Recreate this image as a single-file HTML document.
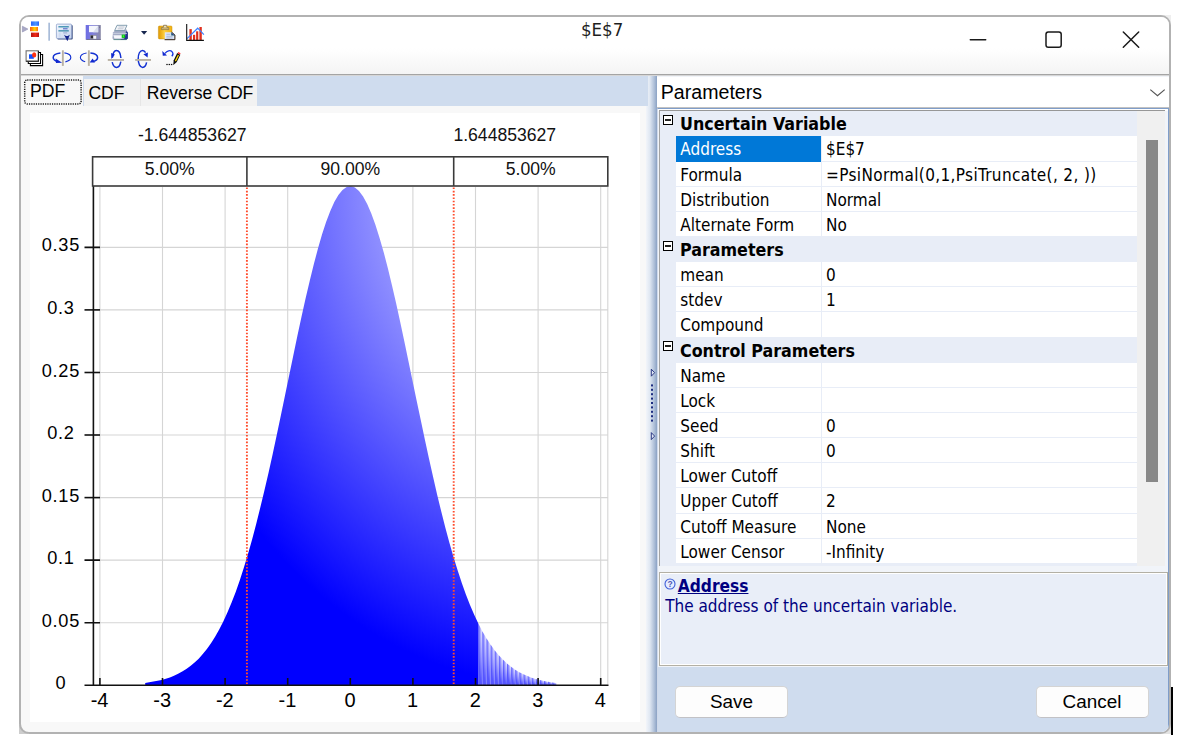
<!DOCTYPE html>
<html lang="en"><head><meta charset="utf-8"><title>$E$7</title>
<style>
html,body{margin:0;padding:0;background:#fff;}
body{width:1183px;height:738px;position:relative;overflow:hidden;font-family:"Liberation Sans",sans-serif;color:#000;}
#win{position:absolute;left:19px;top:15px;width:1152px;height:719px;box-sizing:border-box;border:2px solid #b2b2b2;border-radius:10px;background:#f8f8f8;overflow:hidden;}
#in{position:absolute;left:-21px;top:-17px;width:1183px;height:738px;}
#in>div,#in>svg,#in>span{position:absolute;}
#blackbar{position:absolute;left:1171px;top:687px;width:2px;height:48px;background:#000;}
#titlebar{left:21px;top:17px;width:1148px;height:57px;background:linear-gradient(#fff 0,#fff 55%,#f4f4f4 100%);}
#tline{left:21px;top:74px;width:1148px;height:1px;background:#a4a4a4;}
#tline2{left:21px;top:75px;width:1148px;height:1px;background:#d6d6d6;}
#title{left:581px;top:19px;font-family:"DejaVu Sans Condensed","Liberation Sans",sans-serif;font-size:18.5px;line-height:22px;color:#1e1e1e;white-space:pre;}
#tabstrip{left:21px;top:76px;width:627.4px;height:30px;background:#cfdcee;}
.tab{position:absolute;font-size:17.6px;line-height:20px;white-space:pre;}
#tab1{left:21px;top:76px;width:62px;height:31px;background:#f8f8f8;}
#tab2{left:84px;top:78.6px;width:56px;height:27.4px;background:#f2f2f2;border-right:1px solid #e6e6e6;}
#tab3{left:141px;top:78.6px;width:116px;height:27.4px;background:#f2f2f2;}
#t1{left:30px;top:80.7px;}
#t2{left:88.4px;top:83px;}
#t3{left:146.8px;top:83px;}
#chartbg{left:30px;top:113px;width:610px;height:609px;background:#fff;}
#splitter{left:645.5px;top:76px;width:11.7px;height:656px;background:linear-gradient(90deg,#f2f5fa 0,#dfe7f2 35%,#aebfd8 75%,#8ba2c4 100%);}
#right{left:657.2px;top:76px;width:512px;height:657px;background:#f1f4f9;}
#combo{left:657.2px;top:77px;width:511.8px;height:30px;background:#fff;border-bottom:1px solid #c2c2c2;}
#combotxt{left:660.8px;top:80.8px;font-size:19.6px;line-height:22px;}
#pg{left:659.4px;top:110.2px;width:506px;height:455.4px;box-sizing:border-box;border-top:1px solid #979797;border-left:1px solid #a4a4a4;background:#e8edf7;}
#frame{left:657.4px;top:108.2px;width:511.2px;height:624px;box-sizing:border-box;border:1px solid #7f9dc9;border-left-color:#cfd9ea;border-bottom:0 none;}
#botpanel{left:657.2px;top:666.5px;width:512px;height:66px;background:#cfdcee;}
#gapw{left:657.4px;top:108px;width:511px;height:3px;background:#fff;}
#pgscroll{left:1137.4px;top:111.2px;width:28px;height:454.4px;background:#f0f0f0;}
#thumb{left:1146px;top:140px;width:12px;height:342px;background:#888;}
#rows{left:660px;top:111.3px;width:477px;font-family:"DejaVu Sans Condensed","Liberation Sans",sans-serif;font-size:17px;}
.r{position:relative;height:25.15px;box-sizing:border-box;background:#e8edf7;white-space:pre;overflow:hidden;}
.r .lb{position:absolute;left:16px;top:0;width:145px;height:24.15px;background:#fff;line-height:27px;padding-left:4.3px;box-sizing:border-box;}
.r .vl{position:absolute;left:162px;top:0;width:315px;height:24.15px;background:#fff;line-height:27px;padding-left:4px;box-sizing:border-box;}
.r.sel .lb{background:#0078d7;color:#fff;height:25.15px;}
.r.cat .ct{position:absolute;left:20px;top:0;line-height:27px;font-weight:bold;font-size:17.7px;}
.r.cat .exp{position:absolute;left:3px;top:3.6px;width:10px;height:10px;box-sizing:border-box;border:1px solid #000;background:#fff;}
.r.cat .exp:after{content:"";position:absolute;left:1px;top:3px;width:6px;height:2px;background:#222;}
#desc{left:659.4px;top:571.6px;width:508.2px;height:94.6px;box-sizing:border-box;border:1px solid #b3b0a5;background:#e9eef8;box-shadow:inset 0 0 0 1px #fff;}
#dtitle{left:677.8px;top:574.7px;font-family:"DejaVu Sans Condensed","Liberation Sans",sans-serif;font-weight:bold;font-size:17.2px;line-height:22px;color:#000080;text-decoration:underline;}
#dtext{left:665.2px;top:595.3px;font-family:"DejaVu Sans Condensed","Liberation Sans",sans-serif;font-size:17px;line-height:22px;color:#000080;white-space:pre;}
#dicon{left:664.3px;top:578.2px;width:12px;height:12px;}
.btn{box-sizing:border-box;border:1px solid #d4d4d4;border-bottom-color:#c2c2c6;border-radius:5px;background:#fdfdfd;font-size:18.9px;line-height:30px;text-align:center;height:32.4px;top:686px;}
#bsave{left:675px;width:113px;}
#bcancel{left:1035.5px;width:113px;}
svg text{font-family:"Liberation Sans",sans-serif;}
</style></head>
<body>
<div style="position:absolute;left:1162px;top:15px;width:9px;height:9px;background:#eeeeee"></div><div style="position:absolute;left:19px;top:725px;width:9px;height:9px;background:#cdcdcd"></div><div style="position:absolute;left:1162px;top:725px;width:9px;height:9px;background:#e2e2e2"></div>
<div id="win"><div id="in">
<div id="titlebar"></div>
<div id="tline"></div><div id="tline2"></div>
<div id="splitter"></div>
<div id="title">$E$7</div>
<svg id="ctl" style="left:960px;top:17px" width="200" height="50" viewBox="960 17 200 50">
 <g fill="none" stroke="#1a1a1a" stroke-width="1.5" stroke-linecap="round">
  <line x1="970.3" y1="39.7" x2="985.7" y2="39.7"/>
  <rect x="1046" y="32" width="15.2" height="15.2" rx="2.3"/>
  <path d="M1123.3 32 L1138.7 47.3 M1138.7 32 L1123.3 47.3"/>
 </g>
</svg>
<svg id="tb" style="left:20px;top:17px" width="200" height="56" viewBox="20 17 200 56">
 <defs>
  <linearGradient id="gb" x1="0" x2="1" y1="0" y2="0"><stop offset="0" stop-color="#2a62f8"/><stop offset="0.6" stop-color="#4a96ff"/><stop offset="1" stop-color="#2a62f8"/></linearGradient>
  <linearGradient id="go" x1="0" x2="1" y1="0" y2="0"><stop offset="0" stop-color="#ff5a10"/><stop offset="0.6" stop-color="#ffd200"/><stop offset="1" stop-color="#ff6a10"/></linearGradient>
  <linearGradient id="gr" x1="0" x2="1" y1="0" y2="0"><stop offset="0" stop-color="#b01414"/><stop offset="0.55" stop-color="#f02a14"/><stop offset="1" stop-color="#b81414"/></linearGradient>
  <linearGradient id="gsv" x1="0" x2="1" y1="0" y2="0"><stop offset="0" stop-color="#6c6ce4"/><stop offset="0.5" stop-color="#8080d8"/><stop offset="1" stop-color="#8a8aa6"/></linearGradient>
  <linearGradient id="gcl" x1="0" x2="1" y1="0" y2="0"><stop offset="0" stop-color="#e09800"/><stop offset="0.45" stop-color="#ffd040"/><stop offset="1" stop-color="#f0b010"/></linearGradient>
  <linearGradient id="gfm" x1="0" x2="1" y1="0" y2="1"><stop offset="0" stop-color="#f4f8ff"/><stop offset="1" stop-color="#c4d2ec"/></linearGradient>
 </defs>
 <!-- icon 1: triangle + bars -->
 <path d="M22.4 26.2 L27.9 29.1 L22.4 32 Z" fill="#a9a9c6" stroke="#9090b4" stroke-width="0.6"/>
 <rect x="31" y="21.4" width="8" height="4.4" fill="url(#gb)"/>
 <rect x="30" y="27" width="8" height="4.2" fill="url(#go)"/>
 <rect x="31" y="32.6" width="8" height="4.4" fill="url(#gr)"/>
 <!-- separator -->
 <rect x="48.3" y="22.7" width="1.7" height="18" fill="#a9bcd9"/>
 <!-- icon 2: form with arrow -->
 <rect x="57.3" y="25" width="15.4" height="14.6" rx="1" fill="#3c4e80"/>
 <rect x="56.4" y="24.1" width="15.2" height="14.4" rx="1" fill="url(#gfm)" stroke="#8fa2cc" stroke-width="0.8"/>
 <rect x="58.4" y="26.2" width="10.4" height="1.2" fill="#2a86a8"/>
 <rect x="63" y="28.3" width="4.6" height="1" fill="#4a5cc0"/>
 <rect x="58.4" y="30.2" width="10.4" height="1.3" fill="#3a8aa8"/>
 <rect x="58.8" y="32.6" width="2" height="4.6" fill="#d0dcf2"/>
 <rect x="63.2" y="32.4" width="4" height="1" fill="#9aa8d0"/>
 <path d="M64 34.8 L66 36 L66.9 36 L67.8 36 L69.8 34.8 L67.4 41.3 Z" fill="#14228c"/>
 <!-- icon 3: save -->
 <rect x="85.7" y="25" width="15.1" height="14.8" fill="url(#gsv)"/>
 <rect x="86.4" y="39" width="14.4" height="0.9" fill="#70708c"/>
 <rect x="89" y="25.8" width="9.2" height="6.4" fill="#f4f6fc"/>
 <path d="M98.2 25.8 L98.2 32.2 L93 32.2 Z" fill="#d8deee"/>
 <rect x="99.2" y="26.6" width="0.9" height="1.2" fill="#6a6a80"/>
 <rect x="90.2" y="35" width="6.6" height="4.2" fill="#8c8c98"/>
 <rect x="90.8" y="35.6" width="2.2" height="2.6" fill="#2a2a30"/>
 <rect x="93.4" y="35.8" width="2.8" height="3" fill="#f2f4fa"/>
 <!-- icon 4: printer -->
 <path d="M113 32.6 L116 29.6 L126.6 29.6 L127.9 32.6 L127.9 38.4 L126.4 39.8 L113.6 39.8 L112.4 38.2 Z" fill="#a4acc6"/>
 <path d="M126 31 L127.9 32.6 L127.9 38.4 L126.4 39.8 L120 39.8 L125 37 Z" fill="#24348a"/>
 <path d="M117 25.3 L127 25.3 L124.6 30.6 L114.6 30.6 Z" fill="#f2f4f8" stroke="#6c8aa0" stroke-width="0.8"/>
 <path d="M118.6 27 L124.4 27 M117.8 28.8 L123.4 28.8" stroke="#b0b6c4" stroke-width="0.7"/>
 <path d="M113.2 33.4 L126.8 33.4" stroke="#c8cede" stroke-width="1"/>
 <path d="M113.4 35.2 L124.8 35.2 L124.2 38.6 L114.4 38.6 Z" fill="#f6f7fb"/>
 <rect x="121.7" y="34.6" width="3.3" height="3.3" fill="#04c814"/>
 <rect x="122.8" y="35.4" width="1.1" height="1.4" fill="#70f050"/>
 <path d="M113.6 39.6 L126.4 39.6" stroke="#3a7a70" stroke-width="0.7"/>
 <!-- dropdown arrow -->
 <path d="M141 31 L147.2 31 L144.1 34.7 Z" fill="#17264e"/>
 <!-- icon 5: clipboard -->
 <rect x="158.4" y="26" width="13.6" height="12.9" rx="1" fill="url(#gcl)" stroke="#c89010" stroke-width="0.5"/>
 <path d="M161.4 29.6 L161.4 27.6 L163.2 27.4 L163.6 25.2 L166.6 25.2 L167 27.4 L168.8 27.6 L168.8 29.6 Z" fill="#c8b070" stroke="#7a6a50" stroke-width="0.6"/>
 <rect x="164" y="26.2" width="2.2" height="1" fill="#f2ead0"/>
 <path d="M164.8 32.2 L171.6 32.2 L174.8 35 L174.8 39.4 L164.8 39.4 Z" fill="#dce6f8"/>
 <path d="M171.6 32.2 L174.9 35 L174.9 39.7 L164.6 39.7" fill="none" stroke="#2c1c10" stroke-width="1"/>
 <path d="M171.4 32.4 L171.4 35.2 L174.6 35.2" fill="#2c3c90" stroke="#2a7a70" stroke-width="0.6"/>
 <path d="M166.4 34.3 L170 34.3 M166.4 36.3 L172.6 36.3 M166.4 38 L172.6 38" stroke="#9aa8c8" stroke-width="0.7"/>
 <!-- icon 6: chart -->
 <rect x="189.4" y="29.1" width="2.4" height="11" fill="#e0301e"/>
 <rect x="193" y="34.8" width="2.2" height="5.4" fill="#e0301e"/>
 <rect x="196.1" y="31.3" width="2.2" height="8.8" fill="#e0301e"/>
 <rect x="199.4" y="27" width="2.4" height="13.2" fill="#e0301e"/>
 <path d="M187.1 38.6 L197.7 28.2 L203.9 34.6" fill="none" stroke="#3f82ff" stroke-width="1.2"/>
 <path d="M186.7 23.9 L186.7 40.4 L203.9 40.4" fill="none" stroke="#111" stroke-width="1.1"/>
 <!-- row 2 icon 1: stacked pages -->
 <path d="M40.5 54.5 H42.6 V65.6 H30.4 V63.5" fill="#fff" stroke="#000" stroke-width="1.1"/>
 <path d="M38.5 52.5 H40.5 V63.5 H28.3 V61.4" fill="#fff" stroke="#000" stroke-width="1.1"/>
 <rect x="26.1" y="50.8" width="12.3" height="10.4" fill="#fff" stroke="#707070" stroke-width="1.1"/>
 <path d="M26.1 61.2 L38.4 61.2 L38.4 51" fill="none" stroke="#1a1a1a" stroke-width="1.1"/>
 <rect x="29" y="54.3" width="4.8" height="4.5" fill="#1250ff"/>
 <ellipse cx="34.2" cy="54.9" rx="2.1" ry="2.6" fill="#ff3210"/>
 <!-- row 2 icon 2: rotate about vertical axis (arrow left) -->
 <g fill="none" stroke="#1432d2" stroke-width="1.5">
  <path d="M60.4 52.9 C55.6 53.4 53.2 55.4 53.2 57.4 C53.2 59.2 54.8 60.6 57.6 61.6"/>
  <path d="M64.4 52.9 C68.4 53.4 70.8 55.4 70.8 57.6 C70.8 59.6 68.8 61.2 65.4 61.9" stroke-width="1.15"/>
 </g>
 <path d="M55.6 58.4 L62.2 62.7 L56 62.9 Z" fill="#1028d0"/>
 <rect x="61.9" y="50.3" width="1.9" height="15.6" fill="#b9b1a2"/>
 <!-- row 2 icon 3: rotate about vertical axis (arrow right) -->
 <g fill="none" stroke="#1432d2" stroke-width="1.5">
  <path d="M86.6 53 C82.6 53.6 80.4 55.4 80.4 57.5 C80.4 59.3 82 60.8 85.2 61.7" stroke-width="1.15"/>
  <path d="M90.4 52.9 C95 53.3 97.6 55.3 97.6 57.5 C97.6 59.4 95.8 60.9 93 61.6"/>
 </g>
 <path d="M89.6 62.6 L92.6 58.6 L95 62.6 Z" fill="#1028d0"/>
 <rect x="87.9" y="50.3" width="1.9" height="15.6" fill="#b9b1a2"/>
 <!-- row 2 icon 4: rotate about horizontal axis (arrow down-left) -->
 <g fill="none" stroke="#1432d2" stroke-width="1.5">
  <path d="M112.4 57.8 C112.8 53.4 114.4 50.4 116.4 50.4 C118.8 50.4 120.6 53.6 120.9 58"/>
  <path d="M112.2 62.2 C113 65.6 114.6 67.4 116.4 67.4 C118.6 67.4 120.2 65 120.8 61.6"/>
 </g>
 <path d="M111.1 53.1 L114.9 54.5 L111.4 58.9 Z" fill="#1028d0"/>
 <rect x="107.8" y="59" width="16.2" height="1.9" fill="#b9b1a2"/>
 <!-- row 2 icon 5: rotate about horizontal axis (arrow right) -->
 <g fill="none" stroke="#1432d2" stroke-width="1.5">
  <path d="M145.6 52.6 C144.8 51.2 143.8 50.4 142.6 50.4 C140 50.4 138.2 54 138.2 58.8 C138.2 63.6 140 67.4 142.6 67.4 C144.6 67.4 146 65.4 146.6 62.4"/>
 </g>
 <path d="M143.4 54.2 L147.9 52.4 L147.6 57.6 Z" fill="#1028d0"/>
 <rect x="135.2" y="59" width="15.8" height="1.9" fill="#b9b1a2"/>
 <!-- row 2 icon 6: undo + pencil -->
 <path d="M165 53.4 C167 50.6 170.4 49.8 172 51.6 C173.4 53.2 173 55 171.8 56.2" fill="none" stroke="#1a3ae0" stroke-width="1.3"/>
 <path d="M162.3 51 L162.8 55.8 L167 55.5 Z" fill="#1028d0"/>
 <path d="M173.2 65.3 L173.7 60.3 L177.2 53.1 L180.3 54.7 L176.8 62 Z" fill="#101010"/>
 <path d="M174.9 60.7 L177.9 54.7 L179 55.3 L176 61.4 Z" fill="#ffd800"/>
 <path d="M177.5 53.3 L178.3 52 L180.6 53.3 L179.9 54.6 Z" fill="#ff3030"/>
 <rect x="166.3" y="63.9" width="1.4" height="1.2" fill="#111"/><rect x="168.6" y="63.9" width="1.4" height="1.2" fill="#111"/><rect x="170.9" y="63.9" width="1.4" height="1.2" fill="#111"/>
</svg>

<div id="tabstrip"></div>
<div id="tab1"></div><div id="tab2"></div><div id="tab3"></div>
<svg style="left:22px;top:77px" width="62" height="30" viewBox="22 77 62 30"><rect x="24.7" y="80" width="56.4" height="24" rx="2.5" fill="none" stroke="#1c1c1c" stroke-width="1.5" stroke-dasharray="1.2 1.1"/></svg>
<span class="tab" id="t1">PDF</span><span class="tab" id="t2">CDF</span><span class="tab" id="t3">Reverse CDF</span>
<div id="chartbg"></div>
<svg id="chart" style="left:0;top:0" width="1183" height="738" viewBox="0 0 1183 738">
 <defs>
  <radialGradient id="gfill" gradientUnits="userSpaceOnUse" cx="0" cy="0" r="1" gradientTransform="translate(555.6 186) scale(410.6 499.2)">
   <stop offset="0" stop-color="#ffffff"/>
   <stop offset="1" stop-color="#0000ff"/>
  </radialGradient>
  <radialGradient id="gslice" cx="1" cy="0" r="1" fx="1" fy="0"><stop offset="0" stop-color="#ffffff"/><stop offset="1" stop-color="#0000ff"/></radialGradient>
 </defs>
 <g stroke="#d5d5d5" stroke-width="1.1">
<line x1="99.9" x2="99.9" y1="187" y2="684"/>
<line x1="162.5" x2="162.5" y1="187" y2="684"/>
<line x1="225.1" x2="225.1" y1="187" y2="684"/>
<line x1="287.7" x2="287.7" y1="187" y2="684"/>
<line x1="350.3" x2="350.3" y1="187" y2="684"/>
<line x1="412.9" x2="412.9" y1="187" y2="684"/>
<line x1="475.5" x2="475.5" y1="187" y2="684"/>
<line x1="538.1" x2="538.1" y1="187" y2="684"/>
<line x1="600.7" x2="600.7" y1="187" y2="684"/>
<line x1="95" x2="608" y1="622.7" y2="622.7"/>
<line x1="95" x2="608" y1="560.1" y2="560.1"/>
<line x1="95" x2="608" y1="497.6" y2="497.6"/>
<line x1="95" x2="608" y1="435.0" y2="435.0"/>
<line x1="95" x2="608" y1="372.5" y2="372.5"/>
<line x1="95" x2="608" y1="309.9" y2="309.9"/>
<line x1="95" x2="608" y1="247.4" y2="247.4"/>
<line x1="607.8" x2="607.8" y1="187" y2="684.5"/>
 </g>
 <path d="M145.2 685.2 L145.2 682.9 L149.3 682.3 L153.4 681.6 L157.6 680.8 L161.7 679.9 L165.8 678.7 L169.9 677.4 L174.0 675.7 L178.1 673.8 L182.2 671.6 L186.3 669.0 L190.4 666.1 L194.6 662.6 L198.7 658.7 L202.8 654.1 L206.9 649.0 L211.0 643.2 L215.1 636.7 L219.2 629.5 L223.3 621.4 L227.4 612.5 L231.6 602.6 L235.7 591.9 L239.8 580.2 L243.9 567.5 L248.0 553.9 L252.1 539.4 L256.2 523.9 L260.3 507.5 L264.4 490.4 L268.6 472.5 L272.7 453.9 L276.8 434.8 L280.9 415.3 L285.0 395.6 L289.1 375.7 L293.2 355.9 L297.3 336.3 L301.4 317.2 L305.5 298.7 L309.7 281.0 L313.8 264.3 L317.9 248.8 L322.0 234.6 L326.1 222.0 L330.2 211.2 L334.3 202.1 L338.4 195.0 L342.5 189.9 L346.7 187.0 L350.8 186.1 L354.9 187.5 L359.0 190.9 L363.1 196.5 L367.2 204.0 L371.3 213.5 L375.4 224.8 L379.5 237.7 L383.7 252.2 L387.8 268.0 L391.9 284.9 L396.0 302.8 L400.1 321.5 L404.2 340.8 L408.3 360.4 L412.4 380.2 L416.5 400.1 L420.7 419.8 L424.8 439.2 L428.9 458.2 L433.0 476.6 L437.1 494.4 L441.2 511.3 L445.3 527.5 L449.4 542.8 L453.5 557.1 L457.7 570.5 L461.8 582.9 L465.9 594.4 L470.0 605.0 L474.1 614.6 L478.2 623.3 L478.2 685.2 Z" fill="url(#gfill)"/>
 <g fill="url(#gslice)" stroke="none" opacity="0.66">
<path d="M478.21 685.2 L478.21 623.3 L482.32 631.2 L482.32 685.2 Z"/>
<path d="M482.32 685.2 L482.32 631.2 L486.43 638.3 L486.43 685.2 Z"/>
<path d="M486.43 685.2 L486.43 638.3 L490.54 644.6 L490.54 685.2 Z"/>
<path d="M490.54 685.2 L490.54 644.6 L494.65 650.2 L494.65 685.2 Z"/>
<path d="M494.65 685.2 L494.65 650.2 L498.76 655.2 L498.76 685.2 Z"/>
<path d="M498.76 685.2 L498.76 655.2 L502.87 659.6 L502.87 685.2 Z"/>
<path d="M502.87 685.2 L502.87 659.6 L506.99 663.4 L506.99 685.2 Z"/>
<path d="M506.99 685.2 L506.99 663.4 L511.10 666.8 L511.10 685.2 Z"/>
<path d="M511.10 685.2 L511.10 666.8 L515.21 669.7 L515.21 685.2 Z"/>
<path d="M515.21 685.2 L515.21 669.7 L519.32 672.2 L519.32 685.2 Z"/>
<path d="M519.32 685.2 L519.32 672.2 L523.43 674.3 L523.43 685.2 Z"/>
<path d="M523.43 685.2 L523.43 674.3 L527.54 676.1 L527.54 685.2 Z"/>
<path d="M527.54 685.2 L527.54 676.1 L531.65 677.7 L531.65 685.2 Z"/>
<path d="M531.65 685.2 L531.65 677.7 L535.76 679.0 L535.76 685.2 Z"/>
<path d="M535.76 685.2 L535.76 679.0 L539.87 680.1 L539.87 685.2 Z"/>
<path d="M539.87 685.2 L539.87 680.1 L543.98 681.0 L543.98 685.2 Z"/>
<path d="M543.98 685.2 L543.98 681.0 L548.09 681.8 L548.09 685.2 Z"/>
<path d="M548.09 685.2 L548.09 681.8 L552.21 682.5 L552.21 685.2 Z"/>
<path d="M552.21 685.2 L552.21 682.5 L556.32 683.0 L556.32 685.2 Z"/>
 </g>
 <g stroke="#ff4c2c" stroke-width="1.9" stroke-dasharray="1.6 1.7" fill="none">
  <line x1="246.9" x2="246.9" y1="187.5" y2="684"/>
  <line x1="453.7" x2="453.7" y1="187.5" y2="684"/>
 </g>
 <g stroke="#111" stroke-width="1.6" fill="none">
<line x1="99.9" x2="99.9" y1="678" y2="685"/>
<line x1="162.5" x2="162.5" y1="678" y2="685"/>
<line x1="225.1" x2="225.1" y1="678" y2="685"/>
<line x1="287.7" x2="287.7" y1="678" y2="685"/>
<line x1="350.3" x2="350.3" y1="678" y2="685"/>
<line x1="412.9" x2="412.9" y1="678" y2="685"/>
<line x1="475.5" x2="475.5" y1="678" y2="685"/>
<line x1="538.1" x2="538.1" y1="678" y2="685"/>
<line x1="600.7" x2="600.7" y1="678" y2="685"/>
<line x1="84.5" x2="100" y1="622.7" y2="622.7"/>
<line x1="84.5" x2="100" y1="560.1" y2="560.1"/>
<line x1="84.5" x2="100" y1="497.6" y2="497.6"/>
<line x1="84.5" x2="100" y1="435.0" y2="435.0"/>
<line x1="84.5" x2="100" y1="372.5" y2="372.5"/>
<line x1="84.5" x2="100" y1="309.9" y2="309.9"/>
<line x1="84.5" x2="100" y1="247.4" y2="247.4"/>
  <line x1="93.4" x2="93.4" y1="186" y2="686"/>
  <line x1="84.5" x2="608.5" y1="685.3" y2="685.3"/>
 </g>
 <g stroke="#3a3a3a" stroke-width="1.6" fill="none">
  <rect x="92.6" y="156.8" width="515.2" height="29.2"/>
  <line x1="246.9" x2="246.9" y1="156.8" y2="186"/>
  <line x1="453.7" x2="453.7" y1="156.8" y2="186"/>
 </g>
 <g font-size="17.6" fill="#111">
  <text x="246.5" y="140.60" text-anchor="end">-1.644853627</text>
  <text x="453.4" y="140.60" text-anchor="start">1.644853627</text>
  <text x="169.8" y="174.70" text-anchor="middle">5.00%</text>
  <text x="350.3" y="174.70" text-anchor="middle">90.00%</text>
  <text x="530.7" y="174.70" text-anchor="middle">5.00%</text>
 </g>
 <g font-size="18.2" fill="#000" letter-spacing="0.75">
<text x="99.6" y="706.9" font-size="20" letter-spacing="0" text-anchor="middle">-4</text>
<text x="162.2" y="706.9" font-size="20" letter-spacing="0" text-anchor="middle">-3</text>
<text x="224.8" y="706.9" font-size="20" letter-spacing="0" text-anchor="middle">-2</text>
<text x="287.4" y="706.9" font-size="20" letter-spacing="0" text-anchor="middle">-1</text>
<text x="350.0" y="706.9" font-size="20" letter-spacing="0" text-anchor="middle">0</text>
<text x="412.6" y="706.9" font-size="20" letter-spacing="0" text-anchor="middle">1</text>
<text x="475.2" y="706.9" font-size="20" letter-spacing="0" text-anchor="middle">2</text>
<text x="537.8" y="706.9" font-size="20" letter-spacing="0" text-anchor="middle">3</text>
<text x="600.4" y="706.9" font-size="20" letter-spacing="0" text-anchor="middle">4</text>
<text x="60.9" y="689.2" text-anchor="middle">0</text>
<text x="60.9" y="626.7" text-anchor="middle">0.05</text>
<text x="60.9" y="564.1" text-anchor="middle">0.1</text>
<text x="60.9" y="501.6" text-anchor="middle">0.15</text>
<text x="60.9" y="439.0" text-anchor="middle">0.2</text>
<text x="60.9" y="376.5" text-anchor="middle">0.25</text>
<text x="60.9" y="313.9" text-anchor="middle">0.3</text>
<text x="60.9" y="251.4" text-anchor="middle">0.35</text>
 </g>
</svg>
<svg style="left:646px;top:360px" width="12" height="90" viewBox="646 360 12 90">
 <g fill="#dfe6f4" stroke="#1c2a7c" stroke-width="0.9"><path d="M651.3 369.2 L654.6 372.7 L651.3 376.2 Z"/><path d="M651.3 432.6 L654.6 436.1 L651.3 439.6 Z"/></g>
 <g fill="#1c2c80"><rect x="651" y="384.4" width="2" height="2"/><rect x="651" y="388.8" width="2" height="2"/><rect x="651" y="393.2" width="2" height="2"/><rect x="651" y="397.6" width="2" height="2"/><rect x="651" y="402.0" width="2" height="2"/><rect x="651" y="406.4" width="2" height="2"/><rect x="651" y="410.8" width="2" height="2"/><rect x="651" y="415.2" width="2" height="2"/><rect x="651" y="419.6" width="2" height="2"/></g>
</svg>
<div id="right"></div>
<div id="combo"></div>
<span id="combotxt">Parameters</span>
<svg style="left:1148px;top:86px" width="20" height="14" viewBox="1148 86 20 14"><path d="M1150.3 89.6 L1157.5 95.8 L1164.7 89.6" fill="none" stroke="#555" stroke-width="1.2"/></svg>
<div id="gapw"></div><div id="botpanel"></div><div id="pg"></div>
<div id="pgscroll"></div><div id="thumb"></div>
<div id="rows">
<div class="r cat"><span class="exp"></span><span class="ct">Uncertain Variable</span></div>
<div class="r sel"><span class="lb">Address</span><span class="vl">$E$7</span></div>
<div class="r"><span class="lb">Formula</span><span class="vl"><span style="letter-spacing:0.36px">=PsiNormal(0,1,PsiTruncate(, 2, ))</span></span></div>
<div class="r"><span class="lb">Distribution</span><span class="vl">Normal</span></div>
<div class="r"><span class="lb">Alternate Form</span><span class="vl">No</span></div>
<div class="r cat"><span class="exp"></span><span class="ct">Parameters</span></div>
<div class="r"><span class="lb">mean</span><span class="vl">0</span></div>
<div class="r"><span class="lb">stdev</span><span class="vl">1</span></div>
<div class="r"><span class="lb">Compound</span><span class="vl"></span></div>
<div class="r cat"><span class="exp"></span><span class="ct">Control Parameters</span></div>
<div class="r"><span class="lb">Name</span><span class="vl"></span></div>
<div class="r"><span class="lb">Lock</span><span class="vl"></span></div>
<div class="r"><span class="lb">Seed</span><span class="vl">0</span></div>
<div class="r"><span class="lb">Shift</span><span class="vl">0</span></div>
<div class="r"><span class="lb">Lower Cutoff</span><span class="vl"></span></div>
<div class="r"><span class="lb">Upper Cutoff</span><span class="vl">2</span></div>
<div class="r"><span class="lb">Cutoff Measure</span><span class="vl">None</span></div>
<div class="r"><span class="lb">Lower Censor</span><span class="vl">-Infinity</span></div>
</div>
<div id="desc"></div><div id="frame"></div>
<svg id="dicon" viewBox="0 0 12 12"><circle cx="6" cy="6" r="5" fill="#e6ecff" stroke="#3f5fd8" stroke-width="1.1"/><text x="6" y="9" font-size="8.5" font-weight="bold" text-anchor="middle" fill="#5058b4">?</text></svg>
<span id="dtitle">Address</span>
<span id="dtext">The address of the uncertain variable.</span>
<div class="btn" id="bsave">Save</div>
<div class="btn" id="bcancel">Cancel</div>
</div></div>
<div id="blackbar"></div>
</body></html>
